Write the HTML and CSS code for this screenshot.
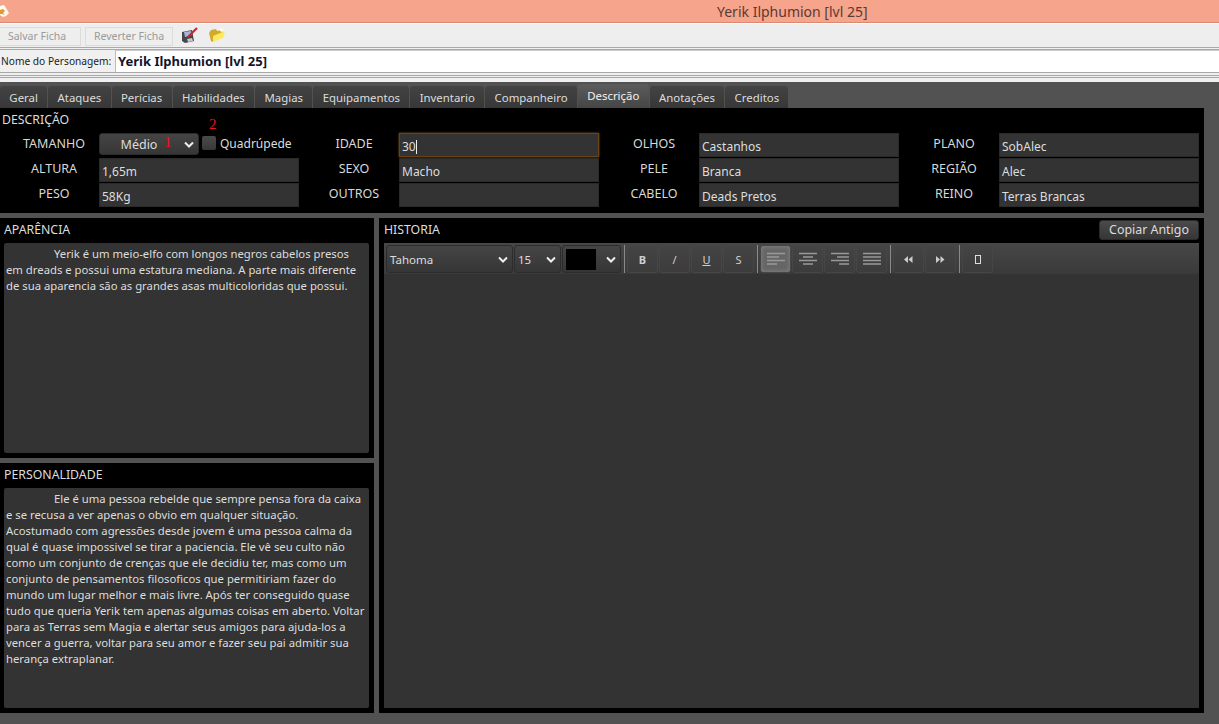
FILE: index.html
```html
<!DOCTYPE html>
<html lang="en">
<head>
  <meta charset="UTF-8" />
  <title>Yerik Ilphumion [lvl 25]</title>
  <link rel="stylesheet" href="styles.css">
</head>
<body>
  <div class="titlebar">
    <svg class="app-icon" width="10" height="16" viewBox="0 0 10 16">
      <path d="M0 4 L4 3 L6 6 L9 11 L6 14 L3 15 L0 13 Z" fill="#fffaf0"/>
      <path d="M0 8 L3 7 L5 9 L3 11 L5 13 L2 12 L0 12 Z" fill="#e8962e"/>
    </svg>
    <span class="title-text">Yerik Ilphumion [lvl 25]</span>
  </div>

  <div class="header">
    <div class="toolbar">
      <button class="tool-btn save-btn">Salvar Ficha</button>
      <button class="tool-btn revert-btn">Reverter Ficha</button>
      <svg class="tool-icon" width="18" height="17" viewBox="0 0 18 17">
        <path d="M1 5 L11 3 L13 14 L4 16 L1 14 Z" fill="#46464e"/>
        <path d="M3 5 L10 4 L11 8 L4 10 Z" fill="#aab6d6"/>
        <path d="M6 12 L11 11 L12 14 L7 15 Z" fill="#c9c9c9"/>
        <path d="M7 10 L16 1" stroke="#d8202a" stroke-width="2.2"/>
      </svg>
      <svg class="tool-icon folder-icon" width="17" height="15" viewBox="0 0 17 15">
        <path d="M0 5 L2 2 L7 1 L8 3 L13 2 L13 6 L5 8 L4 14 L2 13 Z" fill="#d2a92c"/>
        <path d="M4 8 L16 3 L14 10 L4 14 Z" fill="#fbe95e"/>
        <path d="M10 1 L13 0 L15 2 L12 4 Z" fill="#fffbe0"/>
      </svg>
    </div>
    <div class="name-row">
      <label class="name-label">Nome do Personagem:</label>
      <div class="name-input">Yerik Ilphumion [lvl 25]</div>
    </div>
    <div class="rule-lines"></div>
  </div>

  <div class="tabs">
    <div class="tab">Geral</div>
    <div class="tab">Ataques</div>
    <div class="tab">Perícias</div>
    <div class="tab">Habilidades</div>
    <div class="tab">Magias</div>
    <div class="tab">Equipamentos</div>
    <div class="tab">Inventario</div>
    <div class="tab">Companheiro</div>
    <div class="tab active">Descrição</div>
    <div class="tab">Anotações</div>
    <div class="tab">Creditos</div>
  </div>

  <div class="content">
    <section class="panel desc-panel">
      <div class="panel-title">DESCRIÇÃO</div>
      <div class="desc-grid">
        <div class="desc-col">
          <span class="field-label">TAMANHO</span>
          <div class="size-row">
            <div class="select size-select"><span class="size-value">Médio</span><svg class="chev" width="10" height="7" viewBox="0 0 10 7"><path d="M1 1.5 L5 5.5 L9 1.5" fill="none" stroke="#eee" stroke-width="2"/></svg></div>
            <span class="checkbox"></span>
            <span class="check-label">Quadrúpede</span>
          </div>
          <span class="field-label">ALTURA</span>
          <div class="field">1,65m</div>
          <span class="field-label">PESO</span>
          <div class="field">58Kg</div>
        </div>
        <div class="desc-col">
          <span class="field-label">IDADE</span>
          <div class="field focused">30<span class="caret"></span></div>
          <span class="field-label">SEXO</span>
          <div class="field">Macho</div>
          <span class="field-label">OUTROS</span>
          <div class="field"></div>
        </div>
        <div class="desc-col">
          <span class="field-label">OLHOS</span>
          <div class="field">Castanhos</div>
          <span class="field-label">PELE</span>
          <div class="field">Branca</div>
          <span class="field-label">CABELO</span>
          <div class="field">Deads Pretos</div>
        </div>
        <div class="desc-col">
          <span class="field-label">PLANO</span>
          <div class="field">SobAlec</div>
          <span class="field-label">REGIÃO</span>
          <div class="field">Alec</div>
          <span class="field-label">REINO</span>
          <div class="field">Terras Brancas</div>
        </div>
      </div>
      <span class="mark mark-one">1</span>
      <span class="mark mark-two">2</span>
    </section>

    <div class="lower">
      <div class="left-col">
        <section class="panel text-panel">
          <div class="panel-title">APARÊNCIA</div>
          <div class="text-box"><span class="indent"></span>Yerik é um meio-elfo com longos negros cabelos presos<br>em dreads e possui uma estatura mediana. A parte mais diferente<br>de sua aparencia são as grandes asas multicoloridas que possui.</div>
        </section>
        <section class="panel text-panel personality">
          <div class="panel-title">PERSONALIDADE</div>
          <div class="text-box"><span class="indent"></span>Ele é uma pessoa rebelde que sempre pensa fora da caixa<br>e se recusa a ver apenas o obvio em qualquer situação.<br>Acostumado com agressões desde jovem é uma pessoa calma da<br>qual é quase impossivel se tirar a paciencia. Ele vê seu culto não<br>como um conjunto de crenças que ele decidiu ter, mas como um<br>conjunto de pensamentos filosoficos que permitiriam fazer do<br>mundo um lugar melhor e mais livre. Após ter conseguido quase<br>tudo que queria Yerik tem apenas algumas coisas em aberto. Voltar<br>para as Terras sem Magia e alertar seus amigos para ajuda-los a<br>vencer a guerra, voltar para seu amor e fazer seu pai admitir sua<br>herança extraplanar.</div>
        </section>
      </div>

      <section class="panel history">
        <div class="history-head">
          <div class="panel-title">HISTORIA</div>
          <button class="copy-btn">Copiar Antigo</button>
        </div>
        <div class="editor">
          <div class="editor-bar">
            <div class="select font-select">Tahoma<svg class="chev" width="10" height="7" viewBox="0 0 10 7"><path d="M1 1.5 L5 5.5 L9 1.5" fill="none" stroke="#eee" stroke-width="2"/></svg></div>
            <div class="select num-select">15<svg class="chev" width="10" height="7" viewBox="0 0 10 7"><path d="M1 1.5 L5 5.5 L9 1.5" fill="none" stroke="#eee" stroke-width="2"/></svg></div>
            <div class="select color-select"><span class="swatch"></span><svg class="chev" width="10" height="7" viewBox="0 0 10 7"><path d="M1 1.5 L5 5.5 L9 1.5" fill="none" stroke="#eee" stroke-width="2"/></svg></div>
            <span class="sep"></span>
            <div class="ed-btn bold">B</div>
            <div class="ed-btn italic">/</div>
            <div class="ed-btn under">U</div>
            <div class="ed-btn">S</div>
            <span class="sep"></span>
            <div class="ed-btn pressed"><svg width="18" height="14" viewBox="0 0 18 14"><path d="M0 1.5H18M0 5H12M0 8.5H18M0 12H10" stroke="#999" stroke-width="1.6"/></svg></div>
            <div class="ed-btn"><svg width="18" height="14" viewBox="0 0 18 14"><path d="M0 1.5H18M4 5H14M0 8.5H18M4 12H14" stroke="#999" stroke-width="1.6"/></svg></div>
            <div class="ed-btn"><svg width="18" height="14" viewBox="0 0 18 14"><path d="M0 1.5H18M6 5H18M0 8.5H18M8 12H18" stroke="#999" stroke-width="1.6"/></svg></div>
            <div class="ed-btn"><svg width="18" height="14" viewBox="0 0 18 14"><path d="M0 1.5H18M0 5H18M0 8.5H18M0 12H18" stroke="#999" stroke-width="1.6"/></svg></div>
            <span class="sep"></span>
            <div class="ed-btn"><svg width="9" height="7" viewBox="0 0 9 7"><path d="M4 0V7L0 3.5ZM8.5 0V7L4.500 3.500Z" fill="#ccc"/></svg></div>
            <div class="ed-btn"><svg width="9" height="7" viewBox="0 0 9 7"><path d="M0 0V7L4 3.500ZM4.500 0V7L8.500 3.500Z" fill="#ccc"/></svg></div>
            <span class="sep"></span>
            <div class="ed-btn"><span class="glyph-box"></span></div>
          </div>
          <div class="editor-body"></div>
        </div>
      </section>
    </div>
  </div>
</body>
</html>
```

FILE: styles.css
```css
html, body {
  margin: 0;
  padding: 0;
}

body {
  width: 1219px;
  height: 724px;
  overflow: hidden;
  font-family: "Noto Sans", "Open Sans", sans-serif;
  font-size: 12px;
  background: #525252;
  color: #ddd;
}

.titlebar {
  height: 23px;
  box-sizing: border-box;
  background: #f6a48b;
  border-bottom: 1px solid #d98a72;
  padding-left: 717px;
  position: relative;
  color: #5a3a32;
  font-size: 14px;
  line-height: 23px;
}

.app-icon {
  position: absolute;
  left: 0;
  top: 2px;
}

.header {
  background: #f0f0f0;
  height: 59px;
}

.toolbar {
  height: 25px;
  box-sizing: border-box;
  background: #eeeeee;
  border-top: 1px solid #fff;
  border-bottom: 1px solid #a8a8a8;
  display: flex;
  align-items: center;
}

.tool-btn {
  height: 19px;
  margin: 2px 0 0 0;
  padding: 0;
  background: #eeeeee;
  border: 1px solid #dcdcdc;
  color: #9a9a9a;
  font-family: inherit;
  font-size: 10.5px;
  line-height: 17px;
}

.save-btn { width: 81px; border-left: none; margin-right: 4px; padding-right: 6px; }
.revert-btn { width: 88px; }

.tool-icon { margin-left: 8px; }
.folder-icon { margin-left: 10px; }

.name-row {
  height: 24px;
  margin-top: 1px;
  box-sizing: border-box;
  border-top: 1px solid #a8a8a8;
  border-bottom: 1px solid #a8a8a8;
  display: flex;
}

.name-label {
  width: 115px;
  flex: none;
  padding-left: 1px;
  box-sizing: border-box;
  color: #222;
  font-size: 10.2px;
  line-height: 23px;
  white-space: nowrap;
}

.name-input {
  flex: 1;
  background: #fff;
  border-left: 1px solid #bbb;
  border-top: 1px solid #ccc;
  padding-left: 2px;
  font-weight: bold;
  font-size: 13px;
  line-height: 20px;
  color: #14142a;
}

.rule-lines {
  height: 1px;
  margin-top: 2px;
  border-top: 1px solid #a8a8a8;
  border-bottom: 1px solid #a8a8a8;
}

.tabs {
  height: 26px;
  box-sizing: border-box;
  display: flex;
  align-items: flex-end;
  gap: 1px;
}

.tab {
  height: 22px;
  padding: 0 9.35px;
  background: linear-gradient(#434343, #373737);
  border-radius: 3px 3px 0 0;
  color: #ddd;
  line-height: 24px;
  font-size: 11.4px;
}

.tab.active {
  height: 24px;
  background: linear-gradient(#5c5c5c, #454545);
  color: #f2f2f2;
  line-height: 24px;
}

.content {
  width: 1204px;
}

.panel {
  background: #000;
  position: relative;
}

.panel-title {
  color: #ddd;
  font-size: 12.3px;
  line-height: 16px;
}

.desc-panel {
  height: 105px;
  box-sizing: border-box;
  padding: 4px 0 0 2px;
}

.desc-grid {
  display: flex;
  gap: 10px;
  margin: 5px 0 0 7px;
}

.desc-col {
  display: grid;
  grid-template-columns: 90px 200px;
  grid-auto-rows: 25px;
  align-items: start;
}

.field-label {
  text-align: center;
  color: #d8d8d8;
  font-size: 12.5px;
  line-height: 21px;
}

.field {
  height: 24px;
  background: #333;
  border: 1px solid #2a2a2a;
  box-sizing: border-box;
  padding-left: 2px;
  color: #ddd;
  line-height: 25px;
  font-size: 12px;
}

.field.focused {
  border: 1px solid #6a4416;
  box-shadow: 0 0 2px #8a5a1c;
}

.caret {
  display: inline-block;
  width: 1px;
  height: 14px;
  background: #eee;
  vertical-align: -3px;
}

.size-row {
  display: flex;
  align-items: flex-start;
  height: 24px;
}

.select {
  height: 22px;
  box-sizing: border-box;
  background: linear-gradient(#454545, #363636);
  border: 1px solid #2c2c2c;
  border-radius: 3px;
  display: flex;
  align-items: center;
  position: relative;
  color: #ddd;
  flex: none;
  font-size: 11.5px;
}

.chev {
  position: absolute;
  right: 4px;
  top: 7px;
}

.size-select { width: 100px; }
.size-value { width: 78px; text-align: center; font-size: 12.5px; }

.checkbox {
  width: 14px;
  height: 14px;
  margin: 3px 0 0 3px;
  background: linear-gradient(#4a4a4a, #383838);
  border-radius: 2px;
  flex: none;
}

.check-label {
  margin-left: 4px;
  font-size: 12px;
  line-height: 22px;
  color: #ddd;
  white-space: nowrap;
}

.mark {
  position: absolute;
  color: #e8141c;
  font-family: "Liberation Serif", serif;
  font-size: 15px;
  line-height: 16px;
}

.mark-one { left: 164px; top: 26px; }
.mark-two { left: 209px; top: 8px; }

.lower {
  display: flex;
  gap: 5px;
  margin-top: 5px;
  height: 495px;
}

.left-col {
  width: 374px;
  display: flex;
  flex-direction: column;
  gap: 5px;
}

.text-panel {
  height: 240px;
  box-sizing: border-box;
  padding: 4px 5px 5px 4px;
  display: flex;
  flex-direction: column;
}

.personality { height: 250px; }

.text-panel .panel-title {
  height: 21px;
  flex: none;
}

.text-box {
  flex: 1;
  background: #333;
  border-radius: 2px;
  padding: 3px 2px;
  color: #ddd;
  font-size: 11.3px;
  line-height: 16px;
  white-space: nowrap;
  overflow: hidden;
}

.indent {
  display: inline-block;
  width: 48px;
}

.history {
  flex: 1;
  box-sizing: border-box;
  padding: 0 5px 5px 5px;
  display: flex;
  flex-direction: column;
}

.history-head {
  height: 25px;
  box-sizing: border-box;
  padding-bottom: 2px;
  flex: none;
  display: flex;
  justify-content: space-between;
  align-items: center;
}

.copy-btn {
  width: 100px;
  height: 20px;
  padding: 0;
  margin: 0;
  border: 1px solid #2a2a2a;
  border-radius: 3px;
  background: linear-gradient(#4a4a4a, #363636);
  color: #ddd;
  font-family: inherit;
  font-size: 12.4px;
  line-height: 18px;
}

.editor {
  flex: 1;
  background: #333;
  display: flex;
  flex-direction: column;
}

.editor-bar {
  height: 31px;
  box-sizing: border-box;
  background: linear-gradient(#474747, #3a3a3a);
  display: flex;
  align-items: center;
  padding: 1px 0 0 2px;
  gap: 1px;
}

.editor-body {
  flex: 1;
}

.editor-bar .select {
  height: 28px;
}

.font-select { width: 127px; padding-left: 3px; }
.num-select { width: 47px; padding-left: 3px; }
.color-select { width: 59px; }

.swatch {
  width: 30px;
  height: 21px;
  margin-left: 3px;
  background: #000;
}

.editor-bar .chev { top: 10px; }

.sep {
  width: 1px;
  height: 28px;
  background: #8a8a8a;
  margin: 0 1px 0 2px;
}

.ed-btn {
  width: 31px;
  height: 28px;
  box-sizing: border-box;
  border: 1px solid #464646;
  border-radius: 3px;
  background: linear-gradient(#444, #3c3c3c);
  display: flex;
  align-items: center;
  justify-content: center;
  color: #cfcfcf;
  font-size: 11px;
}

.ed-btn.bold { font-weight: bold; }
.ed-btn.under { text-decoration: underline; }

.ed-btn.pressed {
  background: #666;
  box-shadow: inset 0 0 4px #888;
}

.glyph-box {
  width: 4px;
  height: 7px;
  border: 1px solid #ddd;
}
```
